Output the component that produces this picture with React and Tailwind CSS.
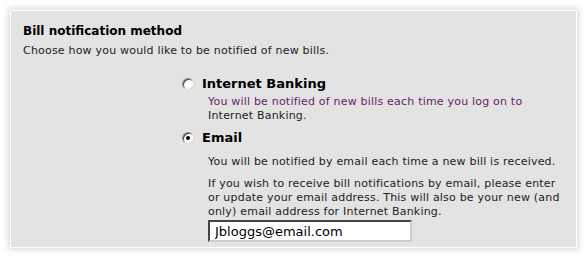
import React from "react";

function Radio({ checked }) {
  return (
    <span className="relative inline-block w-[12px] h-[12px] rounded-full bg-white border border-t-[#8a8a8a] border-l-[#8a8a8a] border-b-[#d8d8d8] border-r-[#d8d8d8] shadow-[inset_1px_1px_0_#404040]">
      {checked && <span className="absolute left-[3px] top-[3px] w-[4px] h-[4px] rounded-full bg-black" />}
    </span>
  );
}

export default function App() {
  return (
    <div className="w-[587px] h-[259px] bg-white pt-[10px] pl-[10px] font-['DejaVu_Sans',Verdana,sans-serif] text-[#222]">
      <div className="w-[567px] h-[238px] bg-[#e3e3e3] border border-white shadow-[0_0_6px_2px_rgba(0,0,0,0.14)] pt-[12px] pl-[12px]">
        <h2 className="text-[12px] font-bold leading-[16px] text-black">Bill notification method</h2>
        <p className="mt-[5px] text-[11px] leading-[14px] tracking-[0.2px]">Choose how you would like to be notified of new bills.</p>

        <div className="ml-[159px] mt-[18px] w-[385px]">
          <label className="flex items-center gap-[8px]">
            <Radio />
            <span className="text-[13px] font-bold leading-[16px] text-black">Internet Banking</span>
          </label>
          <p className="ml-[26px] w-[358px] mt-[3px] text-[11px] leading-[14px] tracking-[0.2px]">
            <span className="text-[#6a1b6a]">You will be notified of new bills each time you log on to</span>
            <br />
            Internet Banking.
          </p>

          <label className="flex items-center gap-[8px] mt-[7px]">
            <Radio checked />
            <span className="text-[13px] font-bold leading-[16px] text-black">Email</span>
          </label>
          <p className="ml-[26px] w-[358px] mt-[9px] text-[11px] leading-[14px] tracking-[0.2px]">
            You will be notified by email each time a new bill is received.
          </p>
          <p className="ml-[26px] w-[358px] mt-[8px] text-[11px] leading-[14px] tracking-[0.2px]">
            If you wish to receive bill notifications by email, please enter or update your email address. This will also be your new (and only) email address for Internet Banking.
          </p>
          <input
            type="text"
            defaultValue="Jbloggs@email.com"
            className="ml-[26px] mt-[1px] block w-[204px] h-[22px] bg-white border-2 border-t-[#444] border-l-[#444] border-b-[#ccc] border-r-[#ccc] px-[5px] text-[13px] text-black outline-none"
          />
        </div>
      </div>
    </div>
  );
}
